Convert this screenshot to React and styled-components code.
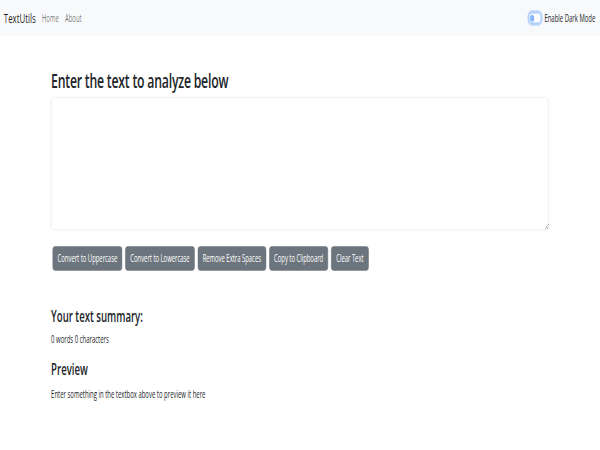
import React from 'react'
import styled, { createGlobalStyle } from 'styled-components'

const GlobalStyle = createGlobalStyle`
  body {
    margin: 0;
    overflow: hidden;
    background: #fff;
    color: #212529;
    font-family: "Open Sans", "Noto Sans", sans-serif;
  }
  * { box-sizing: border-box; }
`

const Frame = styled.div`
  width: 600px;
  height: 450px;
  overflow: hidden;
`

// the screenshot is a wide desktop page squeezed into 600x450
const Page = styled.div`
  width: 1562px;
  height: 698px;
  overflow: hidden;
  transform: scale(0.3841, 0.643);
  transform-origin: 0 0;
`

const Navbar = styled.nav`
  height: 56px;
  background: #f8f9fa;
  display: flex;
  align-items: center;
  justify-content: space-between;
  padding: 0 12px 0 10px;
`

const NavLeft = styled.div`
  display: flex;
  align-items: center;
`

const Brand = styled.a`
  font-size: 20.5px;
  color: rgba(0, 0, 0, 0.9);
  margin-right: 8px;
  text-decoration: none;
`

const NavLink = styled.a`
  font-size: 15.5px;
  padding: 8px;
  color: rgba(0, 0, 0, 0.55);
  text-decoration: none;
`

const SwitchWrap = styled.label`
  display: flex;
  align-items: center;
  gap: 8px;
  font-size: 15.5px;
  color: #212529;
`

const Switch = styled.span`
  width: 32px;
  height: 16px;
  border-radius: 16px;
  border: 1px solid #86b7fe;
  background: #fff;
  box-shadow: 0 0 0 4px rgba(13, 110, 253, 0.25);
  display: flex;
  align-items: center;
  padding-left: 2px;

  &::after {
    content: '';
    width: 11px;
    height: 11px;
    border-radius: 50%;
    background: #86b7fe;
  }
`

const Container = styled.main`
  width: 1296px;
  margin: 0 auto;
  padding-top: ${p => p.top}px;
`

const Heading = styled.h1`
  font-size: ${p => p.size}px;
  font-weight: 600;
  line-height: 1.2;
  letter-spacing: ${p => p.spacing || 0}px;
  margin: 0 0 ${p => p.gap}px;
`

const TextArea = styled.textarea`
  display: block;
  width: 100%;
  height: 207px;
  border: 1px solid #dee2e6;
  border-radius: 6px;
  padding: 6px 12px;
  font-family: inherit;
  font-size: 16px;
  margin-bottom: 21px;
  outline: none;
`

const ButtonRow = styled.div`
  display: flex;
  flex-wrap: wrap;
`

const Button = styled.button`
  background: #6c757d;
  border: 1px solid #6c757d;
  color: #fff;
  border-radius: 6px;
  padding: 6px 12px;
  height: 38px;
  margin: 4px;
  font-family: inherit;
  font-size: 15.5px;
  letter-spacing: -0.1px;
`

const Text = styled.p`
  font-size: 15.5px;
  line-height: 1.5;
  margin: 0 0 ${p => p.gap}px;
`

const buttons = [
  'Convert to Uppercase',
  'Convert to Lowercase',
  'Remove Extra Spaces',
  'Copy to Clipboard',
  'Clear Text',
]

export default function App() {
  return (
    <Frame>
      <GlobalStyle />
      <Page>
        <Navbar>
          <NavLeft>
            <Brand>TextUtils</Brand>
            <NavLink>Home</NavLink>
            <NavLink>About</NavLink>
          </NavLeft>
          <SwitchWrap>
            <Switch />
            Enable Dark Mode
          </SwitchWrap>
        </Navbar>

        <Container top={50}>
          <Heading size={32} gap={7} spacing={-0.6}>Enter the text to analyze below</Heading>
          <TextArea rows={8} />
          <ButtonRow>
            {buttons.map(b => (
              <Button key={b}>{b}</Button>
            ))}
          </ButtonRow>
        </Container>

        <Container top={50}>
          <Heading as="h2" size={25} gap={12}>Your text summary:</Heading>
          <Text gap={17}>0 words 0 characters</Text>
          <Heading as="h2" size={25} gap={14}>Preview</Heading>
          <Text gap={0}>Enter something in the textbox above to preview it here</Text>
        </Container>
      </Page>
    </Frame>
  )
}
